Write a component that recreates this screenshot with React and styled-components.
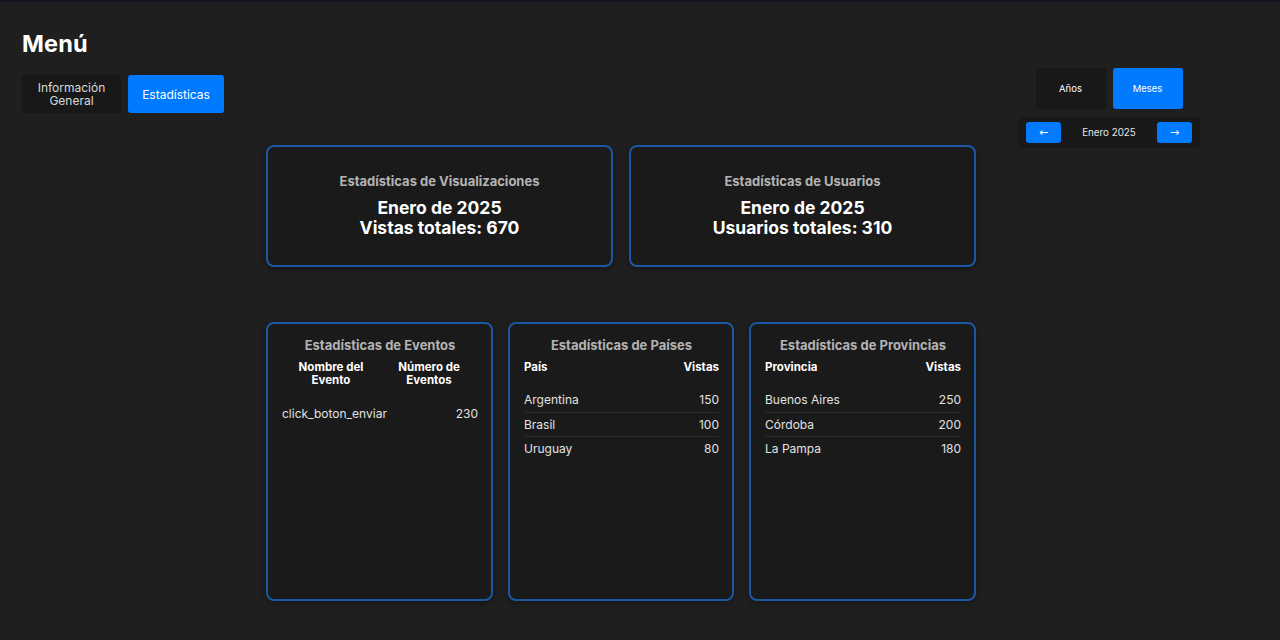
import React from "react";
import styled, { createGlobalStyle } from "styled-components";

const Global = createGlobalStyle`
  html, body { margin: 0; padding: 0; background: #1f1f1f; }
  body { font-family: "Inter", "Noto Sans", sans-serif; color: #fff; }
  * { box-sizing: border-box; }
`;

const Page = styled.div`
  min-height: 640px;
  border-top: 2px solid #15151f;
  padding: 0 38px 0 22px;
  display: grid;
  grid-template-columns: 244px 710px 1fr;
  align-items: start;
`;

const Side = styled.aside`
  display: flex;
  flex-direction: column;
  padding-top: 28px;
`;

const Title = styled.h1`
  margin: 0;
  font-size: 23.5px;
  font-weight: 700;
  letter-spacing: 0.2px;
  line-height: 28px;
`;

const Tabs = styled.div`
  display: flex;
  gap: 7px;
  margin-top: 17px;
`;

const Tab = styled.button`
  border: none;
  border-radius: 3px;
  font-family: inherit;
  font-size: 12px;
  line-height: 13px;
  height: 38px;
  padding: 0 10px;
  color: ${(p) => (p.$active ? "#fff" : "#d8d8d8")};
  background: ${(p) => (p.$active ? "#007bff" : "#181818")};
  width: ${(p) => p.$w}px;
`;

const Main = styled.main`
  padding-top: 143px;
  display: flex;
  flex-direction: column;
`;

const TopRow = styled.div`
  display: grid;
  grid-template-columns: 1fr 1fr;
  gap: 16px;
`;

const Card = styled.section`
  background: #1a1a1a;
  border: 2px solid #1b58a4;
  border-radius: 8px;
  box-shadow: 0 2px 6px rgba(0, 0, 0, 0.35);
`;

const StatCard = styled(Card)`
  height: 122px;
  padding-bottom: 2px;
  display: flex;
  flex-direction: column;
  align-items: center;
  justify-content: center;
  text-align: center;
`;

const CardTitle = styled.h3`
  margin: 0;
  font-size: 13px;
  font-weight: 700;
  color: #b3b3b3;
  line-height: 16px;
`;

const BigLine = styled.div`
  font-size: 17.5px;
  font-weight: 700;
  line-height: 20px;
  color: #fff;
  &:first-of-type { margin-top: 9px; }
`;

const BottomRow = styled.div`
  display: grid;
  grid-template-columns: 227px 226px 227px;
  gap: 15px;
  margin-top: 55px;
`;

const TableCard = styled(Card)`
  height: 279px;
  padding: 13px 13px 0 14px;
  display: flex;
  flex-direction: column;
  align-items: stretch;
`;

const TableTitle = styled(CardTitle)`
  text-align: center;
`;

const Table = styled.table`
  width: 100%;
  border-collapse: collapse;
  margin-top: 3px;
  font-size: 12px;
  table-layout: ${(p) => (p.$fixed ? "fixed" : "auto")};
`;

const Th = styled.th`
  font-weight: 700;
  color: #fff;
  font-size: 11.5px;
  text-align: ${(p) => p.$align || "left"};
  padding: 5px 0 14px;
  line-height: 13px;
  vertical-align: top;
`;

const Td = styled.td`
  color: #e2e2e2;
  text-align: ${(p) => p.$align || "left"};
  height: 24px;
  padding: 0;
  white-space: nowrap;
  border-bottom: ${(p) => (p.$last ? "none" : "1px solid #2b2b2b")};
`;

const Right = styled.aside`
  padding-top: 66px;
  display: flex;
  flex-direction: column;
  align-items: center;
`;

const Toggle = styled.div`
  display: flex;
  gap: 7px;
`;

const ToggleBtn = styled.button`
  width: 70px;
  height: 41px;
  border: none;
  border-radius: 3px;
  font-family: inherit;
  font-size: 9.5px;
  color: #fff;
  background: ${(p) => (p.$active ? "#007bff" : "#181818")};
`;

const Nav = styled.div`
  margin-top: 8px;
  width: 182px;
  height: 31px;
  background: #191919;
  border-radius: 4px;
  display: flex;
  align-items: center;
  justify-content: space-between;
  padding: 0 8px;
`;

const Arrow = styled.button`
  width: 35px;
  height: 21px;
  border: none;
  border-radius: 3px;
  background: #007bff;
  color: #fff;
  font-size: 11px;
  padding: 0;
  font-family: "DejaVu Sans", sans-serif;
`;

const NavLabel = styled.span`
  font-size: 9.8px;
  color: #e6e6e6;
`;

const events = [["click_boton_enviar", 230]];
const paises = [["Argentina", 150], ["Brasil", 100], ["Uruguay", 80]];
const provincias = [["Buenos Aires", 250], ["Córdoba", 200], ["La Pampa", 180]];

function KeyTable({ title, col1, col2, rows }) {
  return (
    <TableCard>
      <TableTitle>{title}</TableTitle>
      <Table>
        <thead>
          <tr>
            <Th>{col1}</Th>
            <Th $align="right">{col2}</Th>
          </tr>
        </thead>
        <tbody>
          {rows.map(([k, v], i) => (
            <tr key={k}>
              <Td $last={i === rows.length - 1}>{k}</Td>
              <Td $align="right" $last={i === rows.length - 1}>{v}</Td>
            </tr>
          ))}
        </tbody>
      </Table>
    </TableCard>
  );
}

export default function App() {
  return (
    <>
      <Global />
      <Page>
        <Side>
          <Title>Menú</Title>
          <Tabs>
            <Tab $w={99}>Información General</Tab>
            <Tab $w={96} $active>Estadísticas</Tab>
          </Tabs>
        </Side>
        <Main>
          <TopRow>
            <StatCard>
              <CardTitle>Estadísticas de Visualizaciones</CardTitle>
              <BigLine>Enero de 2025</BigLine>
              <BigLine>Vistas totales: 670</BigLine>
            </StatCard>
            <StatCard>
              <CardTitle>Estadísticas de Usuarios</CardTitle>
              <BigLine>Enero de 2025</BigLine>
              <BigLine>Usuarios totales: 310</BigLine>
            </StatCard>
          </TopRow>
          <BottomRow>
            <TableCard>
              <TableTitle>Estadísticas de Eventos</TableTitle>
              <Table $fixed>
                <thead>
                  <tr>
                    <Th $align="center">Nombre del<br />Evento</Th>
                    <Th $align="center">Número de<br />Eventos</Th>
                  </tr>
                </thead>
                <tbody>
                  {events.map(([k, v]) => (
                    <tr key={k}>
                      <Td $last>{k}</Td>
                      <Td $align="right" $last>{v}</Td>
                    </tr>
                  ))}
                </tbody>
              </Table>
            </TableCard>
            <KeyTable title="Estadísticas de Países" col1="País" col2="Vistas" rows={paises} />
            <KeyTable title="Estadísticas de Provincias" col1="Provincia" col2="Vistas" rows={provincias} />
          </BottomRow>
        </Main>
        <Right>
          <Toggle>
            <ToggleBtn>Años</ToggleBtn>
            <ToggleBtn $active>Meses</ToggleBtn>
          </Toggle>
          <Nav>
            <Arrow>←</Arrow>
            <NavLabel>Enero 2025</NavLabel>
            <Arrow>→</Arrow>
          </Nav>
        </Right>
      </Page>
    </>
  );
}
